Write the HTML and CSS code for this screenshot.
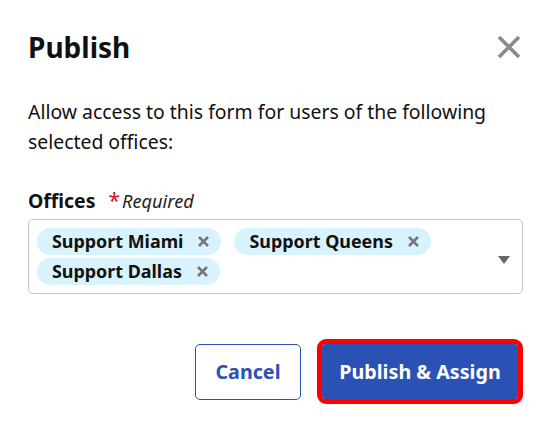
FILE: index.html
```html
<!DOCTYPE html>
<html>
<head>
<meta charset="utf-8">
<link rel="stylesheet" href="styles.css">
</head>
<body>
<div class="dialog">
  <div class="header">
    <h1 class="title">Publish</h1>
    <button class="close" aria-label="Close">
      <svg width="24" height="24" viewBox="0 0 24 24"><path d="M2 2 L22 22 M22 2 L2 22" stroke="#8a8a8a" stroke-width="3.6" fill="none"/></svg>
    </button>
  </div>
  <p class="desc">Allow access to this form for users of the following selected offices:</p>
  <div class="field">
    <div class="label"><span class="label-text">Offices</span><span class="req"><span class="star">*</span>Required</span></div>
    <div class="select">
      <div class="chips">
        <span class="chip">Support Miami<svg class="x" width="11" height="11" viewBox="0 0 11 11"><path d="M1 1 L10 10 M10 1 L1 10" stroke="#777" stroke-width="2.6" fill="none"/></svg></span>
        <span class="chip">Support Queens<svg class="x" width="11" height="11" viewBox="0 0 11 11"><path d="M1 1 L10 10 M10 1 L1 10" stroke="#777" stroke-width="2.6" fill="none"/></svg></span>
        <span class="chip">Support Dallas<svg class="x" width="11" height="11" viewBox="0 0 11 11"><path d="M1 1 L10 10 M10 1 L1 10" stroke="#777" stroke-width="2.6" fill="none"/></svg></span>
      </div>
      <span class="caret"></span>
    </div>
  </div>
  <div class="actions">
    <button class="btn btn-secondary">Cancel</button>
    <button class="btn btn-primary">Publish &amp; Assign</button>
  </div>
</div>
</body>
</html>
```
FILE: styles.css
```css
html, body { margin: 0; padding: 0; background: #fff; }
body { font-family: "Noto Sans", "Open Sans", sans-serif; color: #111; }
.dialog { padding: 25px 24px 0 28px; width: 495px; }
.header { display: flex; justify-content: space-between; align-items: center; height: 44px; }
.title { margin: 0; font-size: 28px; font-weight: 700; line-height: 44px; color: #111; }
.close { background: none; border: 0; padding: 0; width: 24px; height: 24px; margin-right: 2px; display: flex; }
.desc { margin: 28px 0 0; font-size: 19.4px; line-height: 30px; color: #111; }
.field { margin-top: 31px; }
.label { font-size: 19.4px; line-height: 24px; display: flex; align-items: baseline; }
.label-text { font-weight: 700; }
.req { font-style: italic; margin-left: 13px; font-size: 18.2px; color: #222; }
.star { color: #d0142c; font-style: normal; margin-right: 2px; font-size: 21px; }
.select { margin-top: 6px; border: 1px solid #c4c4c4; border-radius: 5px; min-height: 75px; box-sizing: border-box; display: flex; align-items: center; padding: 8px 12px 8px 8px; }
.chips { flex: 1; display: flex; flex-wrap: wrap; gap: 3px 13px; }
.chip { background: #d8f3fd; border-radius: 14px; height: 27px; line-height: 27px; padding: 0 12px 0 15px; font-size: 17.9px; font-weight: 700; display: inline-flex; align-items: center; color: #111; }
.x { margin-left: 15px; }
.caret { width: 0; height: 0; border-left: 6.5px solid transparent; border-right: 6.5px solid transparent; border-top: 8px solid #666; margin-top: 6px; }
.actions { display: flex; justify-content: flex-end; gap: 16px; margin-top: 45px; padding-right: 0; align-items: center; }
.btn { font-family: inherit; font-size: 19.7px; font-weight: 700; border-radius: 5px; cursor: pointer; padding: 0; }
.btn-secondary { background: #fff; border: 1px solid #2b52b3; color: #2b52b3; width: 106px; height: 56px; }
.btn-primary { background: #2a51b4; background-clip: padding-box; color: #fff; border: 5px solid #ff0000; width: 206px; height: 65px; border-radius: 9px; }
```
